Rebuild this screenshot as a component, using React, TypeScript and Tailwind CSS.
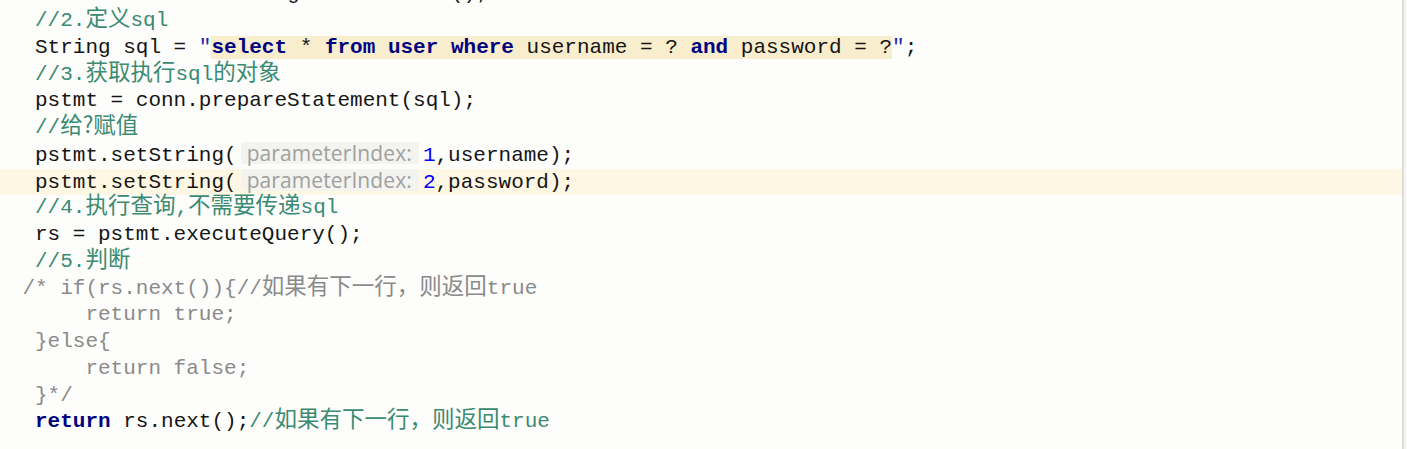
import React from "react";

const KW = "font-bold text-[#000080]";
const NUM = "text-[#0000ff]";
const QT = "text-[#2727a8]";
const CM = "text-[#3b8a72]";
const BC = "text-[#8a8a8a]";

function Cjk({ children }: { children: React.ReactNode }) {
  return <span className="text-[22.5px] leading-[16px] font-['Noto_Sans_CJK_SC','Liberation_Mono',sans-serif]">{children}</span>;
}

function Hint({ children }: { children: React.ReactNode }) {
  return (
    <span className="inline-block align-baseline ml-[4px] mr-[4px] pl-[6px] pr-[7px] rounded-[3px] bg-[#f3f3ef] text-[#a0a0a0] text-[21px] tracking-[0.1px] leading-[22px] font-['Open_Sans',sans-serif]">
      {children}
    </span>
  );
}

function Line({ children, className = "" }: { children?: React.ReactNode; className?: string }) {
  return <div className={"h-[26.75px] leading-[26.75px] whitespace-pre pl-[22.4px] " + className}>{children}</div>;
}

export default function App() {
  return (
    <div className="w-[1407px] h-[449px] overflow-hidden bg-[#fdfdfb] flex">
      <div className="flex-1 overflow-hidden font-['Liberation_Mono','Noto_Sans_CJK_SC',monospace] text-[21px] text-[#151515]">
        <div className="-mt-[18.75px] flex flex-col">
          <Line>{"    conn = JDBCUtils.getConnection();"}</Line>
          <Line>
            <span className={CM}>
              {" //2."}
              <Cjk>定义</Cjk>
              {"sql"}
            </span>
          </Line>
          <Line>
            {" String sql = "}
            <span className={QT}>"</span>
            <span className="bg-[#f8edcd]">
              <span className={KW}>select</span>
              {" * "}
              <span className={KW}>from</span>{" "}
              <span className={KW}>user</span>{" "}
              <span className={KW}>where</span>
              {" username = ? "}
              <span className={KW}>and</span>
              {" password = ?"}
            </span>
            <span className={QT}>"</span>
            {";"}
          </Line>
          <Line>
            <span className={CM}>
              {" //3."}
              <Cjk>获取执行</Cjk>
              {"sql"}
              <Cjk>的对象</Cjk>
            </span>
          </Line>
          <Line>{" pstmt = conn.prepareStatement(sql);"}</Line>
          <Line>
            <span className={CM}>
              {" //"}
              <Cjk>给?赋值</Cjk>
            </span>
          </Line>
          <Line>
            {" pstmt.setString("}
            <Hint>parameterIndex:</Hint>
            <span className={NUM}>1</span>
            {",username);"}
          </Line>
          <Line className="bg-[#fdf7e4]">
            {" pstmt.setString("}
            <Hint>parameterIndex:</Hint>
            <span className={NUM}>2</span>
            {",password);"}
          </Line>
          <Line>
            <span className={CM}>
              {" //4."}
              <Cjk>执行查询</Cjk>
              {","}
              <Cjk>不需要传递</Cjk>
              {"sql"}
            </span>
          </Line>
          <Line>{" rs = pstmt.executeQuery();"}</Line>
          <Line>
            <span className={CM}>
              {" //5."}
              <Cjk>判断</Cjk>
            </span>
          </Line>
          <Line>
            <span className={BC}>
              {"/* if(rs.next()){//"}
              <Cjk>如果有下一行，则返回</Cjk>
              {"true"}
            </span>
          </Line>
          <Line>
            <span className={BC}>{"     return true;"}</span>
          </Line>
          <Line>
            <span className={BC}>{" }else{"}</span>
          </Line>
          <Line>
            <span className={BC}>{"     return false;"}</span>
          </Line>
          <Line>
            <span className={BC}>{" }*/"}</span>
          </Line>
          <Line>
            {" "}
            <span className={KW}>return</span>
            {" rs.next();"}
            <span className={CM}>
              {"//"}
              <Cjk>如果有下一行，则返回</Cjk>
              {"true"}
            </span>
          </Line>
        </div>
      </div>
      <div className="w-[2px] bg-[#dcdcda]" />
      <div className="w-[3px] bg-[#f6f6f4]" />
    </div>
  );
}
